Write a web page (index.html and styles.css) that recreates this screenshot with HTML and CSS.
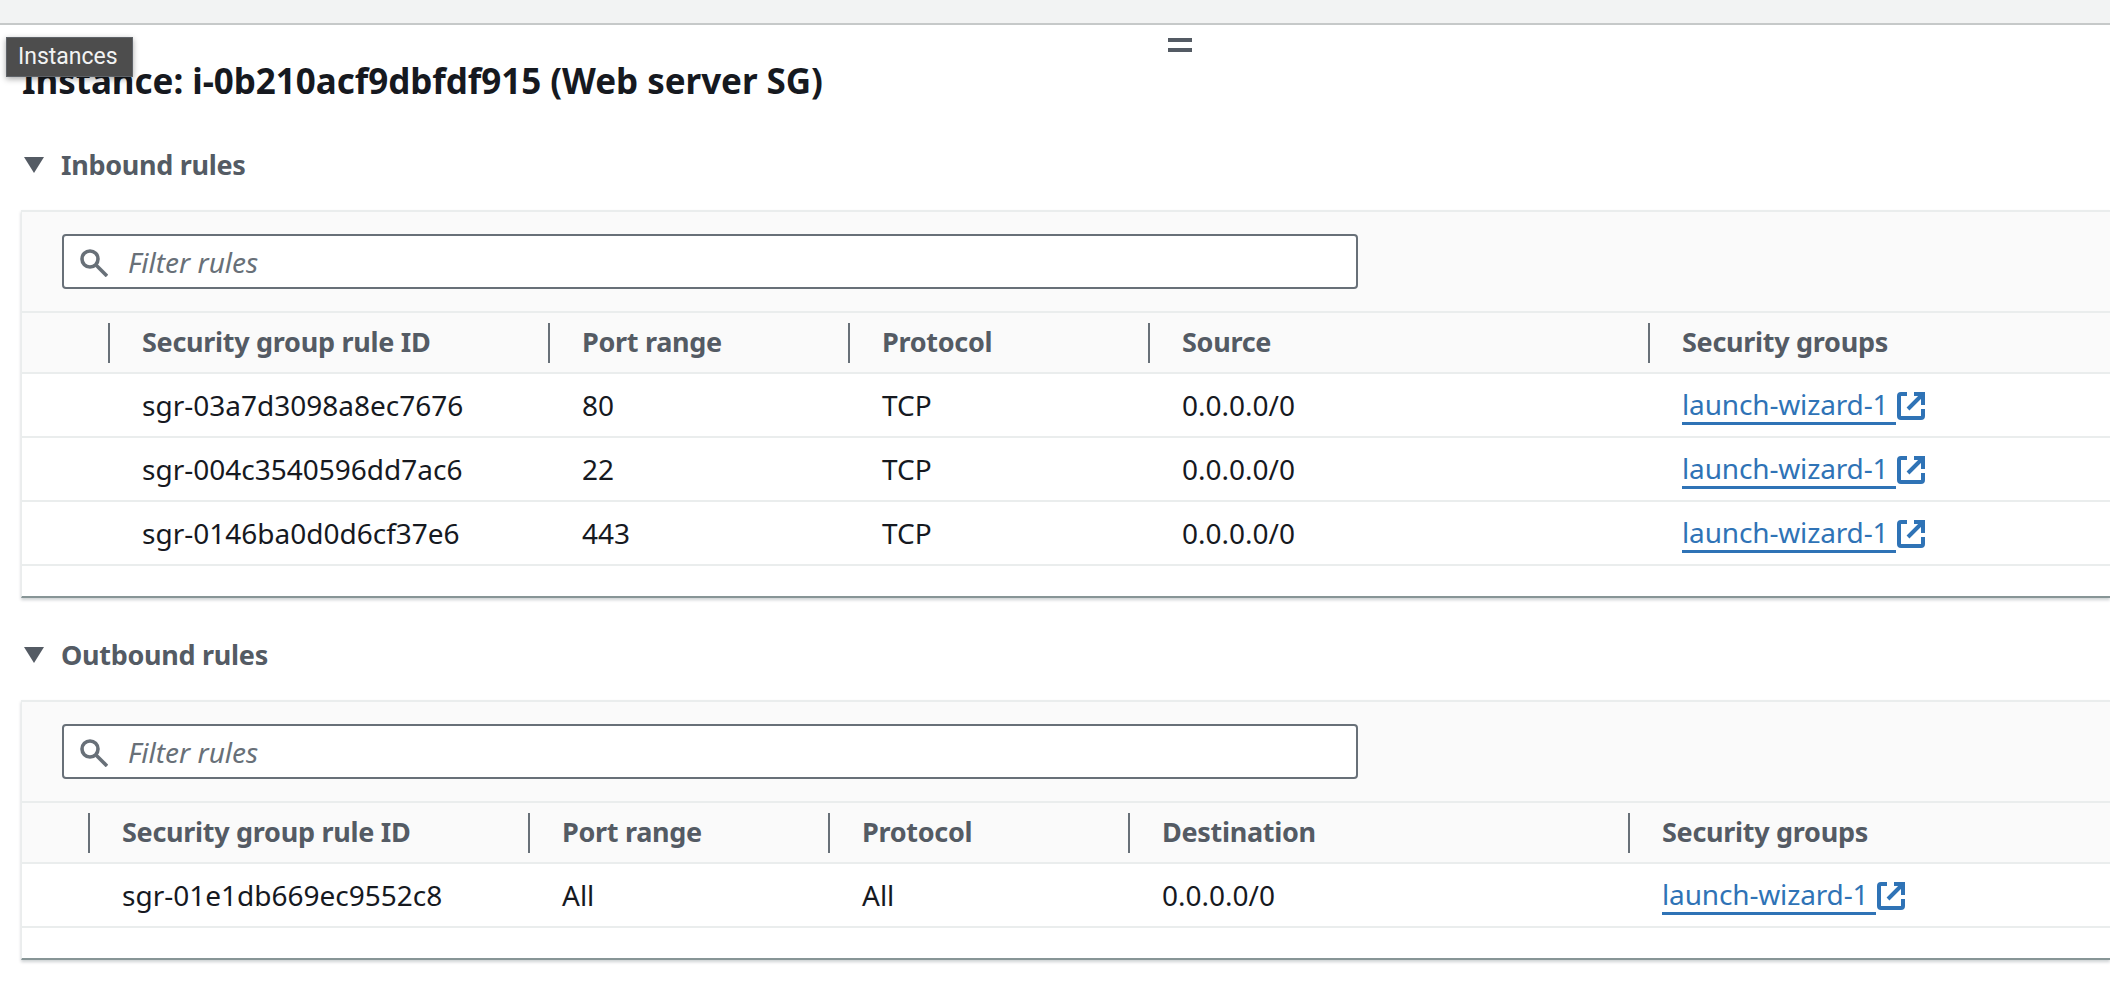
FILE: index.html
```html
<!DOCTYPE html>
<html lang="en">
<head>
    <meta charset="UTF-8">
    <title>Instance security rules</title>
    <link rel="stylesheet" href="styles.css">
</head>
<body>

<div class="topbar"></div>
<div class="handle"></div>
<div class="tooltip">Instances</div>

<div class="content">
    <h1>Instance: i-0b210acf9dbfdf915 (Web server SG)</h1>

    <h2 class="section-title"><span class="caret"></span>Inbound rules</h2>
    <div class="card">
        <div class="filter-bar">
            <div class="filter">
                <svg class="search-icon" viewBox="0 0 28 28"><circle cx="10" cy="10" r="8"/><path d="M15.5 15.5L27 27"/></svg>
                <span class="placeholder">Filter rules</span>
            </div>
        </div>
        <div class="table">
            <div class="row head">
                <div class="cell"></div>
                <div class="cell"><span class="th">Security group rule ID</span></div>
                <div class="cell"><span class="th">Port range</span></div>
                <div class="cell"><span class="th">Protocol</span></div>
                <div class="cell"><span class="th">Source</span></div>
                <div class="cell"><span class="th">Security groups</span></div>
            </div>
            <div class="row">
                <div class="cell"></div>
                <div class="cell td">sgr-03a7d3098a8ec7676</div>
                <div class="cell td">80</div>
                <div class="cell td">TCP</div>
                <div class="cell td">0.0.0.0/0</div>
                <div class="cell td"><a class="link">launch-wizard-1</a><svg class="ext-icon" viewBox="1 1 14 14"><path d="M6 2H3a1 1 0 0 0-1 1v10a1 1 0 0 0 1 1h10a1 1 0 0 0 1-1V9.5M9.5 2H14v5.5M14 2L6.5 9.5"/></svg></div>
            </div>
            <div class="row">
                <div class="cell"></div>
                <div class="cell td">sgr-004c3540596dd7ac6</div>
                <div class="cell td">22</div>
                <div class="cell td">TCP</div>
                <div class="cell td">0.0.0.0/0</div>
                <div class="cell td"><a class="link">launch-wizard-1</a><svg class="ext-icon" viewBox="1 1 14 14"><path d="M6 2H3a1 1 0 0 0-1 1v10a1 1 0 0 0 1 1h10a1 1 0 0 0 1-1V9.5M9.5 2H14v5.5M14 2L6.5 9.5"/></svg></div>
            </div>
            <div class="row">
                <div class="cell"></div>
                <div class="cell td">sgr-0146ba0d0d6cf37e6</div>
                <div class="cell td">443</div>
                <div class="cell td">TCP</div>
                <div class="cell td">0.0.0.0/0</div>
                <div class="cell td"><a class="link">launch-wizard-1</a><svg class="ext-icon" viewBox="1 1 14 14"><path d="M6 2H3a1 1 0 0 0-1 1v10a1 1 0 0 0 1 1h10a1 1 0 0 0 1-1V9.5M9.5 2H14v5.5M14 2L6.5 9.5"/></svg></div>
            </div>
        </div>
        <div class="card-foot"></div>
    </div>

    <h2 class="section-title"><span class="caret"></span>Outbound rules</h2>
    <div class="card">
        <div class="filter-bar">
            <div class="filter">
                <svg class="search-icon" viewBox="0 0 28 28"><circle cx="10" cy="10" r="8"/><path d="M15.5 15.5L27 27"/></svg>
                <span class="placeholder">Filter rules</span>
            </div>
        </div>
        <div class="table scrolled">
            <div class="row head">
                <div class="cell"></div>
                <div class="cell"><span class="th">Security group rule ID</span></div>
                <div class="cell"><span class="th">Port range</span></div>
                <div class="cell"><span class="th">Protocol</span></div>
                <div class="cell"><span class="th">Destination</span></div>
                <div class="cell"><span class="th">Security groups</span></div>
            </div>
            <div class="row">
                <div class="cell"></div>
                <div class="cell td">sgr-01e1db669ec9552c8</div>
                <div class="cell td">All</div>
                <div class="cell td">All</div>
                <div class="cell td">0.0.0.0/0</div>
                <div class="cell td"><a class="link">launch-wizard-1</a><svg class="ext-icon" viewBox="1 1 14 14"><path d="M6 2H3a1 1 0 0 0-1 1v10a1 1 0 0 0 1 1h10a1 1 0 0 0 1-1V9.5M9.5 2H14v5.5M14 2L6.5 9.5"/></svg></div>
            </div>
        </div>
        <div class="card-foot"></div>
    </div>
</div>

</body>
</html>
```

FILE: styles.css
```css
html, body {
    margin: 0;
    padding: 0;
    height: 100%;
    overflow: hidden;
    background-color: white;
    font-family: "Noto Sans", Arial, sans-serif;
    color: #16191f;
}

.topbar {
    height: 23px;
    background-color: #f2f3f3;
    border-bottom: 2px solid #c6c9c9;
}

.handle {
    position: absolute;
    left: 1168px;
    top: 38px;
    width: 24px;
    height: 6px;
    border-top: 4px solid #545b64;
    border-bottom: 4px solid #545b64;
}

.tooltip {
    position: absolute;
    left: 6px;
    top: 37px;
    width: 127px;
    height: 40px;
    box-sizing: border-box;
    padding-left: 11px;
    line-height: 38px;
    font-size: 23px;
    font-family: Roboto, sans-serif;
    color: #f2f3f3;
    background-color: #4d4d4d;
    border: 1px solid #5f6368;
    box-shadow: 0 2px 6px rgba(0, 0, 0, 0.35);
}

.content {
    padding-left: 22px;
}

h1 {
    margin: 32px 0 0 0;
    padding-bottom: 3px;
    font-size: 35px;
    line-height: 48px;
    font-weight: 700;
    letter-spacing: -0.05px;
}

.section-title {
    margin: 37px 0 25px 0;
    height: 40px;
    line-height: 42px;
    font-size: 27px;
    letter-spacing: -0.3px;
    font-weight: 700;
    color: #545b64;
    display: flex;
    align-items: center;
}

.caret {
    width: 0;
    height: 0;
    margin: 0 17px 0 2px;
    border-left: 10px solid transparent;
    border-right: 10px solid transparent;
    border-top: 16px solid #545b64;
}

.card {
    overflow: hidden;
    margin-left: -1px;
    border-top: 2px solid #eaeded;
    border-left: 1px solid #eaeded;
    border-bottom: 2px solid #879596;
    box-shadow: 0 2px 3px rgba(0, 27, 36, 0.2);
}

.filter-bar {
    padding: 22px 0 22px 40px;
    background-color: #fafafa;
    border-bottom: 2px solid #eaeded;
}

.filter {
    width: 1296px;
    height: 55px;
    box-sizing: border-box;
    display: flex;
    align-items: center;
    padding-left: 16px;
    background-color: white;
    border: 2px solid #687078;
    border-radius: 4px;
}

.search-icon {
    width: 28px;
    height: 28px;
    margin-top: 2px;
    margin-right: 20px;
    fill: none;
    stroke: #687078;
    stroke-width: 3.6;
}

.placeholder {
    font-size: 28px;
    font-style: italic;
    color: #687078;
}

.table.scrolled {
    margin-left: -20px;
}

.row {
    display: grid;
    grid-template-columns: 86px 440px 300px 300px 500px 1fr;
    height: 62px;
    align-items: center;
    border-bottom: 2px solid #eaeded;
}

.row.head {
    height: 59px;
    background-color: #fafafa;
}

.th {
    display: block;
    height: 40px;
    line-height: 38px;
    padding-left: 32px;
    border-left: 2px solid #687078;
    font-size: 27px;
    letter-spacing: -0.3px;
    font-weight: 700;
    color: #545b64;
}

.td {
    padding-left: 34px;
    font-size: 28px;
    display: flex;
    align-items: center;
}

.link {
    color: #2f73b6;
    padding-right: 8px;
    letter-spacing: -0.15px;
    border-bottom: 3px solid #2f73b6;
    line-height: 36px;
}

.ext-icon {
    width: 28px;
    height: 28px;
    margin-left: 1px;
    margin-top: 2px;
    fill: none;
    stroke: #2f73b6;
    stroke-width: 2;
}

.card-foot {
    height: 30px;
}
```
